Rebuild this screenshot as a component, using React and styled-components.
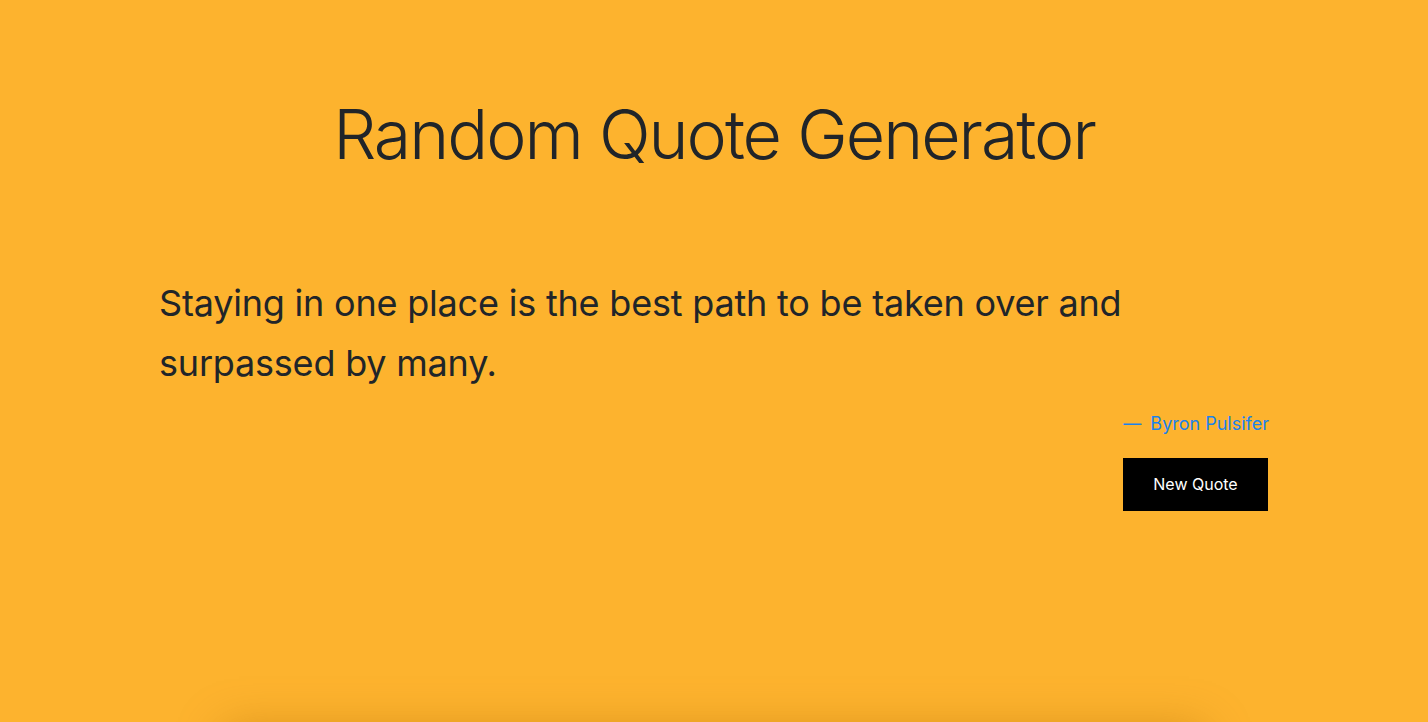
import React, { useState } from "react";
import styled, { createGlobalStyle } from "styled-components";

const GlobalStyle = createGlobalStyle`
  html, body {
    margin: 0;
    padding: 0;
    background: #fdb32e;
    font-family: Inter, "Noto Sans", sans-serif;
    color: #212529;
  }
`;

const quotes = [
  {
    text: "Staying in one place is the best path to be taken over and surpassed by many.",
    author: "Byron Pulsifer",
  },
];

const Page = styled.main`
  min-height: 722px;
  overflow: hidden;
  background: #fdb32e;
`;

const Container = styled.div`
  max-width: 1110px;
  margin: 0 auto;
  padding: 0 15px;
`;

const Title = styled.h1`
  margin: 0;
  padding-top: 94px;
  font-size: 68px;
  font-weight: 300;
  line-height: 1.2;
  letter-spacing: -2px;
  text-align: center;
  color: #212529;
`;

const Quote = styled.blockquote`
  margin: 97px 0 0;
  font-size: 36px;
  line-height: 60px;
  font-weight: 400;
  letter-spacing: -0.2px;
  color: #212529;
`;

const Author = styled.footer`
  margin-top: 20px;
  text-align: right;
  font-size: 18px;
  color: #1b82ec;
  &::before {
    content: "— ";
    margin-right: 4px;
  }
`;

const Actions = styled.div`
  display: flex;
  justify-content: flex-end;
  margin-top: 24px;
`;

const Button = styled.button`
  width: 145px;
  height: 53px;
  margin-right: 1px;
  border: none;
  border-radius: 0;
  background: #000;
  color: #fff;
  font-family: Inter, "Noto Sans", sans-serif;
  font-size: 16px;
  cursor: pointer;
`;

const Card = styled.div`
  margin: 218px auto 0;
  width: 980px;
  height: 200px;
  box-shadow: 0 0 44px rgba(160, 95, 0, 0.4);
`;

export default function App() {
  const [index, setIndex] = useState(0);
  const quote = quotes[index];

  return (
    <Page>
      <GlobalStyle />
      <Container>
        <Title>Random Quote Generator</Title>
        <Quote>{quote.text}</Quote>
        <Author>{quote.author}</Author>
        <Actions>
          <Button onClick={() => setIndex((index + 1) % quotes.length)}>
            New Quote
          </Button>
        </Actions>
      </Container>
      <Card />
    </Page>
  );
}
